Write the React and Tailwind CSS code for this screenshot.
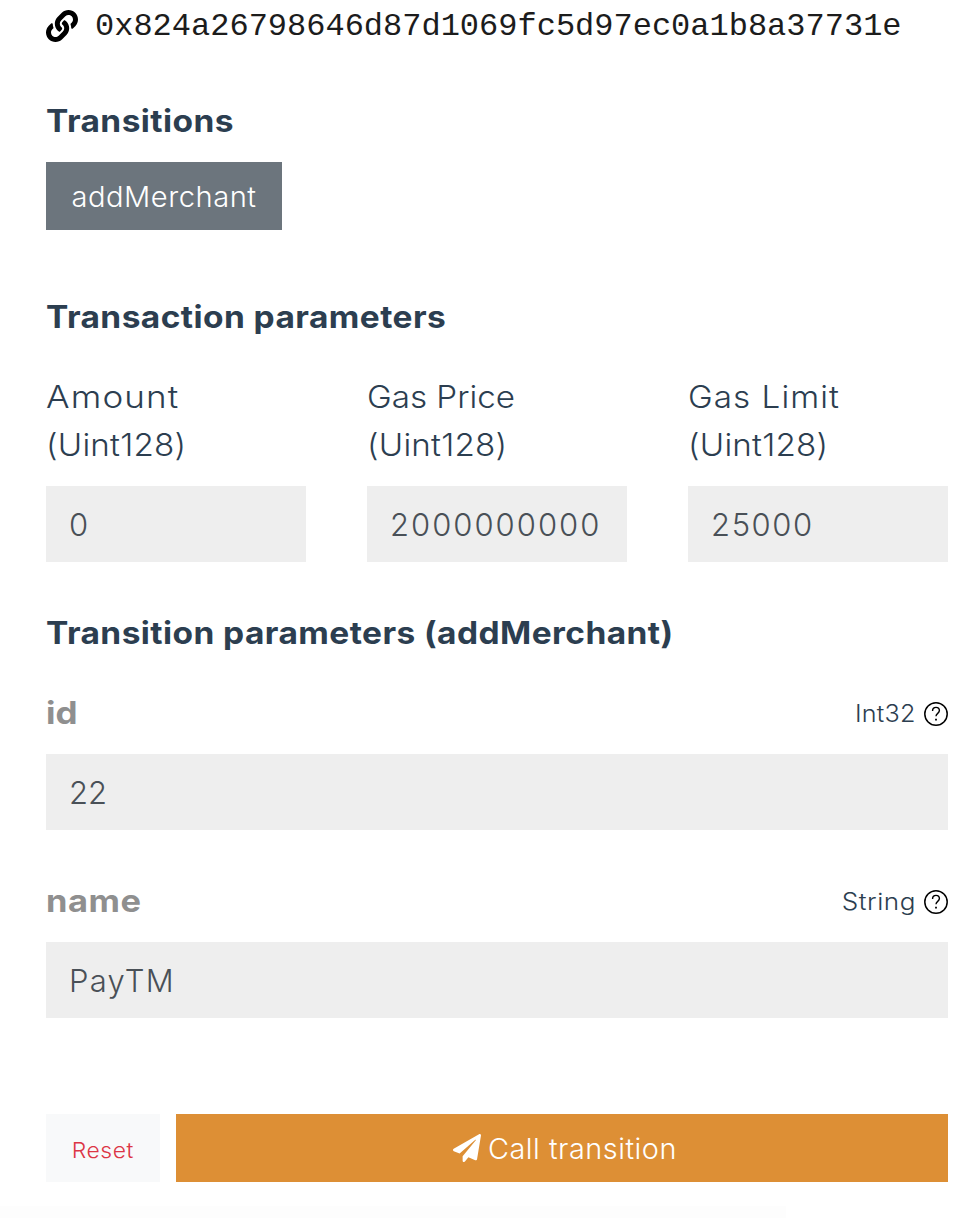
import { FaLink, FaPaperPlane } from "react-icons/fa";

function HelpIcon() {
  return (
    <svg viewBox="0 0 24 24" className="size-6 shrink-0" fill="none" stroke="#000" strokeWidth="1.5">
      <circle cx="12" cy="12" r="11.2" />
      <path d="M8.6 9V8.6a3.4 3.2 0 0 1 6.8 0c0 2.8-3.4 2.7-3.4 5.6" strokeWidth="1.4" />
      <path d="M12 16.8v1.8" strokeWidth="1.8" />
    </svg>
  );
}

function Heading({ children, className }) {
  return (
    <h2 className={`origin-left scale-x-108 text-[31px] leading-[48px] font-bold tracking-[0.4px] whitespace-nowrap text-[#2c3e50] ${className}`}>
      {children}
    </h2>
  );
}

function Input({ value, className }) {
  return (
    <input
      defaultValue={value}
      className={`block h-[76px] w-full rounded-none bg-[#eeeeee] pr-0 pl-[23px] text-[31px] font-light text-[#495057] outline-none ${className}`}
    />
  );
}

function NumberField({ label, value, labelClass, inputClass }) {
  return (
    <div className="w-[260px]">
      <label className="block text-[31px] leading-[48px] font-light whitespace-nowrap text-[#2c3e50]">
        <span className={`block origin-left ${labelClass}`}>{label}</span>
        <span className="block origin-left scale-x-107 tracking-[0.2px]">(Uint128)</span>
      </label>
      <Input value={value} className={`mt-[17px] ${inputClass}`} />
    </div>
  );
}

function ParamField({ name, type, value, nameClass, typeClass, inputClass }) {
  return (
    <div>
      <div className="flex h-12 items-center justify-between">
        <span className={`origin-left text-[31px] leading-[48px] font-bold text-[#8f8f8f] ${nameClass}`}>{name}</span>
        <span className="flex items-center gap-2 pt-px">
          <span className={`origin-right text-[23.5px] leading-6 font-light text-[#2c3e50] ${typeClass}`}>{type}</span>
          <HelpIcon />
        </span>
      </div>
      <Input value={value} className={`mt-[17px] ${inputClass}`} />
    </div>
  );
}

export default function App() {
  return (
    <div className="h-[1218px] w-[956px] overflow-hidden bg-white font-['Inter',sans-serif]">
      <main className="flex h-[1206px] flex-col pr-2 pl-[46px]">
        <div className="flex h-[52px] items-center gap-[17px]">
          <FaLink className="size-8 shrink-0 text-black" />
          <span className="pt-0.5 font-['Liberation_Mono',monospace] text-[32px] leading-9 whitespace-nowrap text-[#1c1c1c]">
            0x824a26798646d87d1069fc5d97ec0a1b8a37731e
          </span>
        </div>

        <Heading className="mt-[45px]">Transitions</Heading>
        <button className="mt-[17px] h-[68px] w-[236px] bg-[#6c757d] pt-0.5 text-[28px] font-light text-white">
          <span className="inline-block scale-x-104 tracking-[0.5px]">addMerchant</span>
        </button>

        <Heading className="mt-[63px]">Transaction parameters</Heading>
        <div className="mt-8 flex justify-between">
          <NumberField label="Amount" value="0" labelClass="scale-x-113 tracking-[1px]" inputClass="tracking-[0px]" />
          <NumberField label="Gas Price" value="2000000000" labelClass="scale-x-107" inputClass="tracking-[2px]" />
          <NumberField label="Gas Limit" value="25000" labelClass="scale-x-107 tracking-[1px]" inputClass="tracking-[1.6px]" />
        </div>

        <Heading className="mt-[47px]">Transition parameters (addMerchant)</Heading>
        <div className="mt-8 flex flex-col gap-[47px]">
          <ParamField name="id" type="Int32" value="22" nameClass="scale-x-113" typeClass="scale-x-107 tracking-[0.2px]" inputClass="tracking-[0px]" />
          <ParamField name="name" type="String" value="PayTM" nameClass="scale-x-111 tracking-[0.5px]" typeClass="scale-x-111 tracking-[0.5px]" inputClass="tracking-[1.2px]" />
        </div>

        <div className="mt-24 flex gap-4">
          <button className="h-[68px] w-[114px] bg-[#f8f9fa] pt-1 text-[22px] font-light text-[#dc3545]">
            <span className="inline-block scale-x-104 tracking-[0.5px]">Reset</span>
          </button>
          <button className="flex h-[68px] flex-1 items-center justify-center gap-[7px] bg-[#dd8f35] pr-1 pl-1 text-[28px] font-light text-white">
            <FaPaperPlane className="size-7" />
            <span className="origin-left scale-x-103 pt-0.5 tracking-[0.5px]">Call transition</span>
          </button>
        </div>
      </main>
      <div className="h-3 w-[786px] bg-[#fdfdfd]" />
    </div>
  );
}
